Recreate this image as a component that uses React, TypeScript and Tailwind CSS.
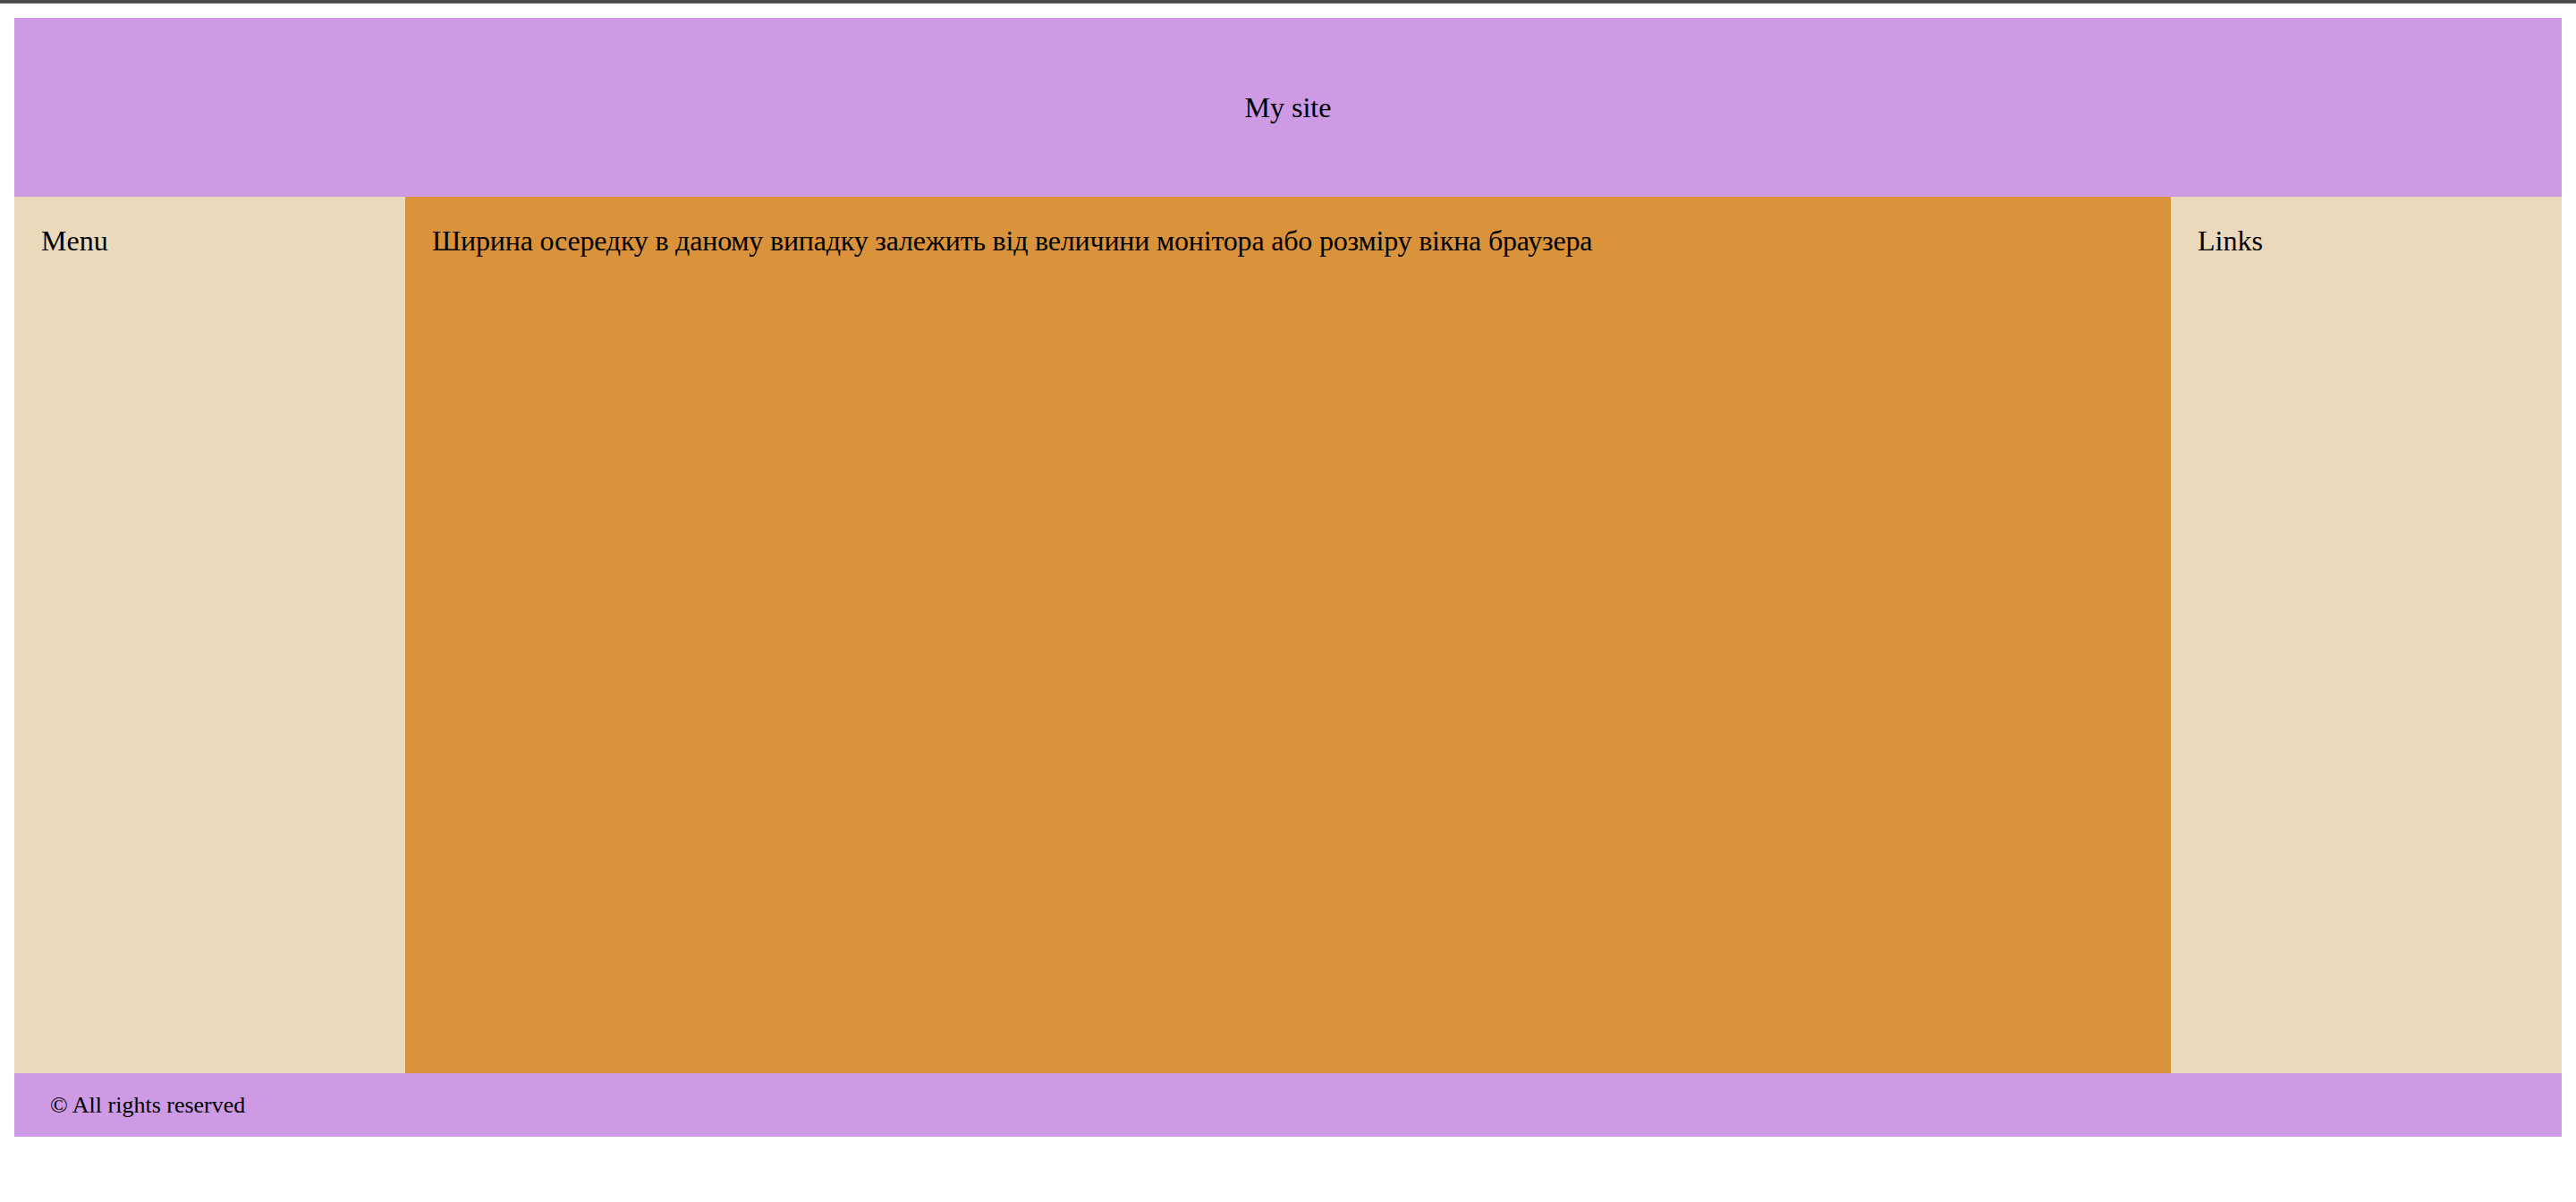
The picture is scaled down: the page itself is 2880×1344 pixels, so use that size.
export default function App() {
  return (
    <div className="min-h-screen bg-white text-black font-['Liberation_Serif','Times_New_Roman',serif]">
      {/* window edge */}
      <div className="h-[4px] bg-[#4b4b4b] border-b border-[#6a6a6a]" />

      <div className="mx-4 mt-4">
        <header className="h-[200px] bg-[#ce9ae3] flex items-center justify-center text-[32px]">
          My site
        </header>

        <div className="flex h-[980px]">
          <aside className="w-[437px] shrink-0 bg-[#ebd9bc] px-[30px] pt-[25px] text-[32px]">Menu</aside>
          <main className="flex-1 bg-[#da933a] px-[30px] pt-[25px] text-[32px] tracking-[-0.2px]">
            Ширина осередку в даному випадку залежить від величини монітора або розміру вікна браузера
          </main>
          <aside className="w-[437px] shrink-0 bg-[#ebd9bc] px-[30px] pt-[25px] text-[32px]">Links</aside>
        </div>

        <footer className="h-[71px] bg-[#ce9ae3] flex items-center pl-[40px] text-[26px]">
          © All rights reserved
        </footer>
      </div>
    </div>
  );
}
